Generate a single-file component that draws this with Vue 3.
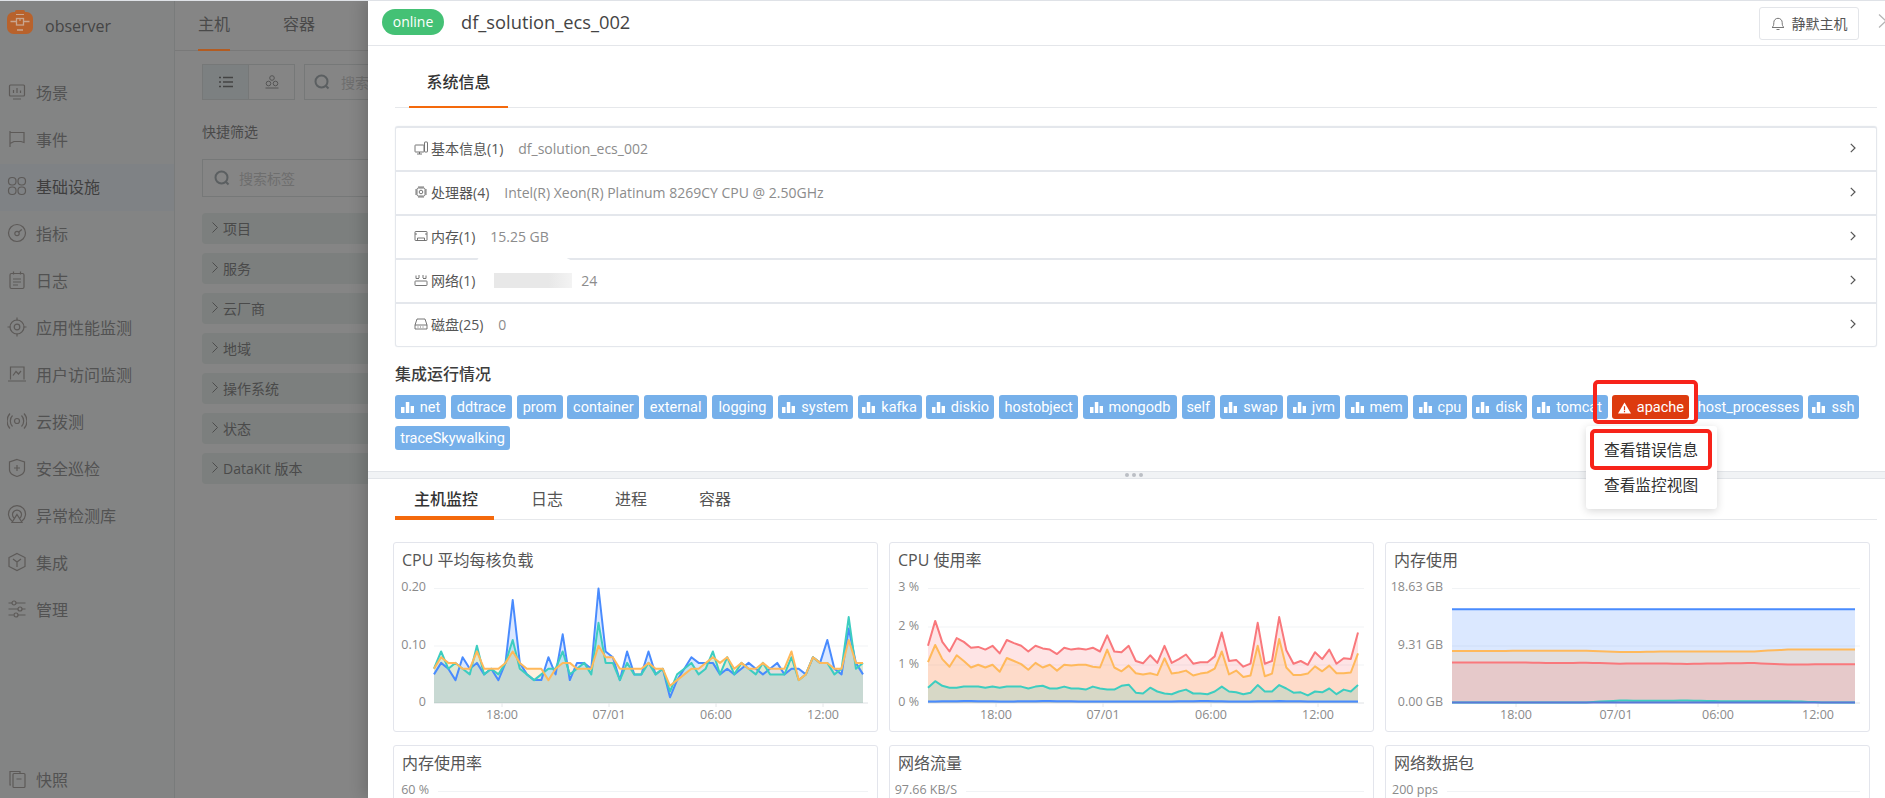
<script setup>
const nav = [
  { t: '场景', i: '<rect x="2.5" y="3" width="15" height="11" rx="1"/><path d="M6.5 11V8M10 11V6M13.5 11V8.5M6 17h8"/>' },
  { t: '事件', i: '<path d="M3 2v16M3 3.500h14v10l-3-1H7l-4 2"/>' },
  { t: '基础设施', i: '<rect x="1.500" y="1.500" width="7.500" height="7.500" rx="3.500"/><rect x="11" y="1.500" width="7.500" height="7.500" rx="3.500"/><rect x="1.500" y="11" width="7.500" height="7.500" rx="3.500"/><rect x="11" y="11" width="7.500" height="7.500" rx="3.500"/>', active: true },
  { t: '指标', i: '<circle cx="10" cy="10" r="8.500"/><circle cx="10" cy="10.500" r="2.200"/><path d="M11.800 9l3-2.500"/>' },
  { t: '日志', i: '<rect x="3" y="3.500" width="14" height="15" rx="1.500"/><path d="M6.500 1.500v3M13.500 1.500v3M6 9h8M6 12h8M6 15h5"/>' },
  { t: '应用性能监测', i: '<circle cx="10" cy="10" r="7"/><circle cx="10" cy="10" r="2.800"/><path d="M10 0.500v3M10 16.500v3M0.500 10h3M16.500 10h3"/>' },
  { t: '用户访问监测', i: '<path d="M3.500 15.500V3h13.500v12.500M1 17h18M6 11.500l3-4 2.500 2.500 2.500-3"/>' },
  { t: '云拨测', i: '<circle cx="10" cy="10" r="2.500"/><path d="M5.500 4.500a8 8 0 0 0 0 11M14.500 4.500a8 8 0 0 1 0 11M3 2.500a11 11 0 0 0 0 15M17 2.500a11 11 0 0 1 0 15"/>' },
  { t: '安全巡检', i: '<path d="M10 1.500l7.500 2.500v8c0 3-4 5.500-7.500 6.500-3.500-1-7.500-3.500-7.500-6.500V4zM10 7v6M7 10h6"/>' },
  { t: '异常检测库', i: '<path d="M5 16a8.500 8.500 0 1 1 10 0M7 13a4.500 4.500 0 1 1 6 0M10 9.500l5 8H5z"/>' },
  { t: '集成', i: '<path d="M10 1.500l8 4v9l-8 4-8-4v-9zM6 7l4 3 4-3M10 10v5"/>' },
  { t: '管理', i: '<path d="M1.500 4h3.500M9 4h9.500M1.500 10h9.500M15 10h3.500M1.500 16h5M11 16h7.500"/><circle cx="7" cy="4" r="2"/><circle cx="13" cy="10" r="2"/><circle cx="9" cy="16" r="2"/>' }
]
const snapIcon = '<rect x="6" y="4.500" width="12" height="14" rx="1"/><path d="M4 16H3V2.500h10V4.500M9.500 10h5"/>'
const filters = ['项目', '服务', '云厂商', '地域', '操作系统', '状态', 'DataKit 版本']

const infoRows = [
  { label: '基本信息(1)', value: 'df_solution_ecs_002', i: '<rect x="1" y="4" width="9" height="7" rx="0.500"/><path d="M3 13h5M5.500 11v2"/><rect x="10.500" y="1" width="3" height="10" rx="0.500" fill="#fff"/>' },
  { label: '处理器(4)', value: 'Intel(R) Xeon(R) Platinum 8269CY CPU @ 2.50GHz', i: '<rect x="3" y="3" width="8" height="8" rx="1.500"/><circle cx="7" cy="7" r="1.800"/><path d="M5 1v2M7 1v2M9 1v2M5 11v2M7 11v2M9 11v2M1 5h2M1 7h2M1 9h2M11 5h2M11 7h2M11 9h2"/>' },
  { label: '内存(1)', value: '15.25 GB', i: '<rect x="1" y="2.500" width="12" height="9" rx="0.500"/><path d="M1 5h2M11 5h2M3.500 11.500V9h7v2.500"/>' },
  { label: '网络(1)', value: '24', redact: true, i: '<rect x="1" y="8" width="12" height="4.500" rx="0.500"/><path d="M2 2.500v3M5 2v3M9 2v3M12 2.500v3M2 5.500h3M9 5.500h3"/>' },
  { label: '磁盘(25)', value: '0', i: '<path d="M3 2h8l2 6v4H1V8zM1 8h12M3.500 10h1M6 10h1M8.500 10h1"/>' }
]

const tags = [
  ['net', 1, 51], ['ddtrace', 0, 61], ['prom', 0, 46], ['container', 0, 72], ['external', 0, 63], ['logging', 0, 61], ['system', 1, 75], ['kafka', 1, 64], ['diskio', 1, 68],
  ['hostobject', 0, 79], ['mongodb', 1, 94], ['self', 0, 33], ['swap', 1, 63], ['jvm', 1, 53], ['mem', 1, 63], ['cpu', 1, 54], ['disk', 1, 55], ['tomcat', 1, 76],
  ['apache', 2, 77], ['host_processes', 0, 109], ['ssh', 1, 51], ['traceSkywalking', 0, 115]
].map(([name, kind, width]) => ({ name, kind, width }))

const detailTabs = ['主机监控', '日志', '进程', '容器']

const BLUE = '#498bfe', TEAL = '#3dcdc0', ORANGE = '#ffb95b', RED = '#f9787c'
const TOP = 9.5, BOTTOM = 124

function stretch(points, n = 61) {
  const out = []
  for (let i = 0; i < n; i++) {
    const p = (i / (n - 1)) * (points.length - 1)
    const a = Math.floor(p), b = Math.min(a + 1, points.length - 1)
    out.push(points[a] + (points[b] - points[a]) * (p - a))
  }
  return out
}

function build(spec) {
  const { x0, x1, max } = spec
  const series = (spec.series || []).map(s => {
    const step = (x1 - x0) / (s.values.length - 1)
    const pts = s.values.map((v, i) => [x0 + i * step, BOTTOM - (v / max) * (BOTTOM - TOP)])
    const line = pts.map((p, i) => (i ? 'L' : 'M') + p[0].toFixed(1) + ' ' + p[1].toFixed(1)).join(' ')
    return { color: s.color, line, area: line + ` L${x1} ${BOTTOM} L${x0} ${BOTTOM} Z` }
  })
  return { ...spec, series }
}

const charts = [
  {
    title: 'CPU 平均每核负载', gx0: 40, gx1: 474, x0: 40, x1: 469, max: 0.2, labelX: 32,
    y: [['0.20', TOP], ['0.10', 67], ['0', BOTTOM]], x: [['18:00', 108], ['07/01', 215], ['06:00', 322], ['12:00', 429]],
    series: [
      { color: BLUE, values: [.05,.07,.06,.04,.08,.06,.07,.05,.06,.04,.07,.18,.07,.05,.04,.04,.08,.05,.12,.04,.07,.07,.06,.20,.09,.08,.04,.09,.05,.05,.09,.05,.06,.01,.04,.06,.08,.07,.07,.07,.05,.06,.05,.06,.07,.06,.05,.06,.07,.05,.06,.06,.05,.08,.07,.11,.06,.05,.13,.07,.05] },
      { color: TEAL, values: [.06,.09,.06,.07,.06,.05,.10,.05,.06,.05,.07,.11,.06,.05,.04,.05,.06,.06,.09,.05,.06,.07,.05,.14,.07,.07,.04,.07,.05,.05,.07,.05,.06,.02,.05,.06,.07,.05,.06,.09,.05,.08,.05,.07,.06,.05,.07,.05,.05,.05,.08,.04,.05,.08,.07,.07,.05,.06,.15,.06,.07] },
      { color: ORANGE, values: [.06,.08,.07,.07,.06,.06,.09,.06,.06,.06,.07,.09,.07,.06,.06,.06,.04,.06,.07,.07,.06,.06,.06,.10,.08,.08,.06,.06,.06,.06,.07,.06,.06,.03,.04,.05,.06,.06,.07,.08,.07,.08,.06,.07,.06,.06,.07,.06,.06,.06,.09,.04,.05,.08,.07,.07,.06,.06,.11,.07,.07] }
    ]
  },
  {
    title: 'CPU 使用率', gx0: 38, gx1: 474, x0: 38, x1: 468, max: 3, labelX: 29,
    y: [['3 %', TOP], ['2 %', 48], ['1 %', 86], ['0 %', BOTTOM]], x: [['18:00', 106], ['07/01', 213], ['06:00', 321], ['12:00', 428]],
    series: [
      { color: RED, values: [1.5,2.15,1.6,1.35,1.7,1.6,1.45,1.47,1.4,1.5,1.3,1.65,1.57,1.5,1.35,1.5,1.43,1.4,1.28,1.45,1.4,1.43,1.4,1.45,1.35,1.77,1.35,1.33,1.5,1.1,1.04,1.25,1.05,1.5,1.05,1.15,1.27,1.03,1.07,1.07,1.22,1.85,1.1,1.13,.95,1.03,2.1,1.03,1.1,2.25,1.38,1.03,1.1,1.0,1.33,1.15,1.4,1.03,1.17,1.15,1.85] },
      { color: ORANGE, values: [1.07,1.52,1.15,.95,1.25,1.1,.93,1.0,.93,1.0,.82,1.18,1.1,1.02,.87,1.05,.93,1.0,.85,1.0,.98,1.0,1.0,.95,.93,1.4,.93,.83,.98,.78,.75,.78,.73,1.17,.77,.8,.85,.72,.77,.8,.9,1.35,.75,.85,.68,.72,1.5,.7,.77,1.68,.93,.73,.73,.77,.96,.83,.98,.78,.78,.8,1.3] },
      { color: TEAL, values: [.4,.57,.45,.4,.4,.43,.43,.43,.4,.43,.4,.43,.43,.43,.38,.43,.45,.38,.38,.43,.38,.38,.35,.43,.38,.35,.35,.45,.48,.27,.25,.4,.3,.25,.23,.3,.35,.25,.25,.23,.3,.43,.3,.28,.23,.27,.47,.3,.3,.47,.38,.27,.28,.2,.3,.28,.38,.23,.35,.3,.47] },
      { color: BLUE, values: stretch([.04, .05, .04, .05, .04, .04, .04, .05, .04, .05, .04, .04]) }
    ]
  },
  {
    title: '内存使用', gx0: 66, gx1: 474, x0: 66, x1: 469, max: 18.63, labelX: 57,
    y: [['18.63 GB', TOP], ['9.31 GB', 67], ['0.00 GB', BOTTOM]], x: [['18:00', 130], ['07/01', 230], ['06:00', 332], ['12:00', 432]],
    series: [
      { color: BLUE, values: stretch([15.25, 15.25]) },
      { color: ORANGE, values: stretch([8.45, 8.45, 8.5, 8.5, 8.5, 8.28, 8.35, 8.4, 8.4, 8.4, 8.7, 8.7, 8.7]) },
      { color: RED, values: stretch([6.6, 6.6, 6.6, 6.5, 6.55, 6.4, 6.45, 6.35, 6.45, 6.5, 6.25, 6.3, 6.3]) },
      { color: TEAL, values: stretch([.1, .1, .1, .1, .1, .4, .35, .4, .3, .3, .3, .1, .1]) },
      { color: '#5a78d8', values: stretch([.08, .08]) }
    ]
  },
  {
    title: '内存使用率', gx0: 44, gx1: 474, x0: 44, x1: 469, max: 60, labelX: 35, y: [['60 %', TOP]], x: [],
    bars: [[44, 122, '#e6effe'], [166, 72, '#d2e3fe'], [300, 95, '#e6effe'], [395, 74, BLUE]]
  },
  { title: '网络流量', gx0: 76, gx1: 474, x0: 76, x1: 469, max: 1, labelX: 67, y: [['97.66 KB/S', TOP]], x: [] },
  { title: '网络数据包', gx0: 61, gx1: 474, x0: 61, x1: 469, max: 1, labelX: 52, y: [['200 pps', TOP]], x: [] }
].map(build)
</script>

<template>
  <div class="page">
    <div class="app">
      <aside class="side">
        <div class="brand">
          <svg class="logo" viewBox="0 0 26 24">
            <rect x="8" y="0" width="10" height="5" rx="1.500" fill="#b8622c" />
            <rect x="0" y="2" width="26" height="22" rx="6.500" fill="#b8622c" />
            <path d="M3.500 11.500h6M16.500 11.500h6M10 20h6" stroke="#c9a68f" stroke-width="1.400" fill="none" />
            <rect x="9.500" y="8.500" width="7" height="6.500" fill="none" stroke="#c9a68f" stroke-width="1.300" />
            <path d="M13 8.500v2.500M9 4.500h8" stroke="#c9a68f" stroke-width="1.100" fill="none" />
          </svg>
          <span class="brand-name">observer</span>
        </div>
        <div v-for="n in nav" :key="n.t" class="nav-item" :class="{ active: n.active }">
          <svg class="nav-icon" viewBox="0 0 20 20" v-html="n.i"></svg>
          <span>{{ n.t }}</span>
        </div>
        <div class="nav-item snap">
          <svg class="nav-icon" viewBox="0 0 20 20" v-html="snapIcon"></svg>
          <span>快照</span>
        </div>
      </aside>
      <main class="main">
        <div class="main-tabs">
          <span class="main-tab on">主机</span>
          <span class="main-tab">容器</span>
        </div>
        <div class="toolbar">
          <div class="views">
            <span class="view on">
              <svg width="14" height="12" viewBox="0 0 14 12" fill="none" stroke="#444" stroke-width="1.300"><path d="M0 1.500h2M4 1.500h10M0 6h2M4 6h10M0 10.500h2M4 10.500h10" /></svg>
            </span>
            <span class="view">
              <svg width="14" height="14" viewBox="0 0 14 14" fill="none" stroke="#555"><circle cx="7" cy="3" r="2.300" /><circle cx="3.500" cy="8.500" r="2.300" /><circle cx="10.500" cy="8.500" r="2.300" /><path d="M0.500 13h13" /></svg>
            </span>
          </div>
          <div class="search wide">
            <svg class="search-icon" viewBox="0 0 16 16" fill="none" stroke="#5b5f61" stroke-width="2"><circle cx="7.500" cy="7.500" r="6" /><path d="M12 12l2.500 2.500" /></svg>
            <span>搜索</span>
          </div>
        </div>
        <div class="quick">快捷筛选</div>
        <div class="search tag-search">
          <svg class="search-icon" viewBox="0 0 16 16" fill="none" stroke="#5b5f61" stroke-width="2"><circle cx="7.500" cy="7.500" r="6" /><path d="M12 12l2.500 2.500" /></svg>
          <span>搜索标签</span>
        </div>
        <div v-for="f in filters" :key="f" class="filter">
          <svg width="6" height="11" viewBox="0 0 6 11" fill="none" stroke="#4d4d4d"><path d="M0.500 0.500l5 5-5 5" /></svg>
          <span>{{ f }}</span>
        </div>
      </main>
    </div>

    <section class="drawer">
      <header class="head">
        <span class="badge">online</span>
        <span class="host">df_solution_ecs_002</span>
        <button class="mute">
          <svg width="14" height="15" viewBox="0 0 14 15" fill="none" stroke="#777"><path d="M1 11.500h12c-1.500-1-1.800-2.500-1.800-5a4.200 4.200 0 0 0-8.400 0c0 2.500-.3 4-1.800 5zM5.500 13.500h3" /></svg>
          <span>静默主机</span>
        </button>
      </header>
      <svg class="close" width="10" height="16" viewBox="0 0 10 16" fill="none" stroke="#b4b4b4" stroke-width="1.200"><path d="M1 1.500l7 6.500-7 6.500" /></svg>

      <div class="tabbar">
        <span class="tab-on">系统信息</span>
      </div>

      <div class="panel">
        <div v-for="r in infoRows" :key="r.label" class="row">
          <svg class="row-icon" viewBox="0 0 14 14" fill="none" stroke="#666" stroke-width="0.900" v-html="r.i"></svg>
          <span class="row-label">{{ r.label }}</span>
          <span v-if="r.redact" class="redact"><i class="blob"></i><i class="mask"></i></span>
          <span class="row-value" :class="{ tight: r.redact }">{{ r.value }}</span>
          <svg class="row-arrow" width="6" height="10" viewBox="0 0 6 10" fill="none" stroke="#555" stroke-width="1.200"><path d="M0.800 0.800L5 5 0.800 9.200" /></svg>
        </div>
      </div>

      <h3 class="section">集成运行情况</h3>
      <div class="tags">
        <span v-for="t in tags" :key="t.name" class="tag" :class="{ bad: t.kind === 2 }" :style="{ width: t.width + 'px' }">
          <svg v-if="t.kind === 1" width="13" height="11" viewBox="0 0 13 11" fill="#fff"><rect x="0" y="5" width="3.500" height="6" /><rect x="4.800" y="0" width="3.500" height="11" /><rect x="9.600" y="4" width="3.400" height="7" /></svg>
          <svg v-if="t.kind === 2" width="13" height="12" viewBox="0 0 13 12"><path d="M6.500 0.500L13 11.500H0z" fill="#fff" /><path d="M6.500 4.200v4M6.500 9v1.300" stroke="#dd3b0e" stroke-width="1.200" /></svg>
          {{ t.name }}
        </span>
      </div>

      <div class="resizer"><i></i><i></i><i></i></div>

      <nav class="detail-tabs">
        <span v-for="(d, i) in detailTabs" :key="d" class="detail-tab" :class="{ on: i === 0 }">{{ d }}</span>
      </nav>

      <div class="charts">
        <article v-for="c in charts" :key="c.title" class="card">
          <h4 class="card-title">{{ c.title }}</h4>
          <svg class="plot" width="483" height="150" viewBox="0 0 483 150">
            <line v-for="l in c.y" :key="l[0]" :x1="c.gx0" :x2="c.gx1" :y1="l[1]" :y2="l[1]" class="grid" />
            <template v-if="c.x.length">
              <line :x1="c.gx0" :x2="c.gx1" :y1="BOTTOM" :y2="BOTTOM" class="base" />
              <line v-for="l in c.x" :key="'t' + l[0]" :x1="l[1]" :x2="l[1]" :y1="BOTTOM" :y2="BOTTOM + 4" class="base" />
            </template>
            <rect v-for="(b, i) in c.bars || []" :key="i" :x="b[0]" :width="b[1]" y="16" height="10" :fill="b[2]" />
            <g v-for="(s, i) in c.series" :key="i">
              <path :d="s.area" :fill="s.color" fill-opacity="0.2" />
            </g>
            <g v-for="(s, i) in c.series" :key="'l' + i">
              <path :d="s.line" :stroke="s.color" fill="none" stroke-width="2" stroke-linejoin="round" />
            </g>
            <text v-for="l in c.y" :key="'y' + l[0]" :x="c.labelX" :y="l[1] - 0.5" class="axis" text-anchor="end" dominant-baseline="middle">{{ l[0] }}</text>
            <text v-for="l in c.x" :key="'x' + l[0]" :x="l[1]" y="137" class="axis" text-anchor="middle" dominant-baseline="middle">{{ l[0] }}</text>
          </svg>
        </article>
      </div>

      <div class="mark mark-tag"></div>
      <div class="menu">
        <div class="menu-item">查看错误信息</div>
        <div class="menu-item">查看监控视图</div>
      </div>
      <div class="mark mark-item"></div>
    </section>
    <div class="topline"></div>
  </div>
</template>

<style>
html, body { margin: 0; overflow: hidden; background: #fff; }
</style>

<style scoped>
.page {
  position: relative;
  width: 1885px;
  height: 798px;
  overflow: hidden;
  font-family: "Open Sans", "Noto Sans CJK SC", sans-serif;
  background: #858585;
}
.topline { position: absolute; left: 0; right: 0; top: 0; height: 1px; background: #dfe2e7; }

.app { display: flex; height: 798px; }
.side {
  width: 174px;
  flex: none;
  display: flex;
  flex-direction: column;
  background: #838484;
  border-right: 1px solid #797b7b;
  color: #525252;
}
.brand { height: 70px; flex: none; box-sizing: border-box; padding: 10px 0 0 7px; display: flex; align-items: flex-start; gap: 12px; }
.logo { width: 26px; height: 24px; }
.brand-name { font-size: 16px; line-height: 32px; color: #454545; }
.nav-item { height: 47px; box-sizing: border-box; padding: 0 0 3px 7px; flex: none; display: flex; align-items: center; gap: 9px; font-size: 16px; }
.nav-item.active { background: #7f8285; color: #3f3f3f; }
.nav-item.snap { margin-top: auto; height: 38px; padding-bottom: 0; }
.nav-icon { width: 20px; height: 20px; fill: none; stroke: #5d5a58; stroke-width: 1.200; flex: none; }

.main { flex: 1; padding-left: 27px; color: #4a4a4a; min-width: 0; }
.main-tabs { height: 50px; margin-left: -27px; padding-left: 23px; border-bottom: 1px solid #797979; display: flex; gap: 53px; }
.main-tab { font-size: 16px; line-height: 48px; height: 51px; box-sizing: border-box; color: #4a4a4a; }
.main-tab.on { border-bottom: 2px solid #b35c22; }
.toolbar { display: flex; gap: 9px; margin-top: 13px; }
.views { display: flex; border: 1px solid #767878; height: 34px; }
.view { width: 45px; display: flex; align-items: center; justify-content: center; }
.view.on { background: #7c8081; border-right: 1px solid #767878; }
.search { display: flex; align-items: center; gap: 11px; border: 1px solid #767878; box-sizing: border-box; font-size: 14px; color: #6e6e6e; }
.search.wide { width: 300px; height: 36px; padding-left: 9px; }
.search-icon { width: 16px; height: 16px; flex: none; }
.quick { font-size: 14px; line-height: 20px; margin-top: 22px; }
.tag-search { margin-top: 17px; width: 400px; height: 38px; padding-left: 11px; gap: 9px; }
.filter { margin-top: 9px; height: 31px; width: 400px; background: #7c7f7e; border-radius: 4px; display: flex; align-items: center; gap: 5px; padding: 0 0 2px 10px; font-size: 14px; box-sizing: border-box; }
.tag-search + .filter { margin-top: 16px; }

.drawer {
  position: absolute;
  left: 368px;
  top: 0;
  width: 1517px;
  height: 798px;
  background: #fff;
  box-shadow: -5px 0 14px rgba(0, 0, 0, 0.16);
  overflow: hidden;
}
.head { box-sizing: border-box; border-bottom: 1px solid #e4e6ea; display: flex; align-items: center; padding: 1px 26px 0 14px; height: 46px; }
.badge { width: 62px; height: 26px; margin-top: -3px; border-radius: 13px; background: #44c175; color: #fff; font-size: 14px; line-height: 25px; text-align: center; }
.host { margin-left: 17px; font-size: 18.300px; color: #444; margin-top: -3px; }
.mute { margin-left: auto; width: 100px; height: 33px; box-sizing: border-box; display: flex; align-items: center; justify-content: center; gap: 7px; background: #fff; border: 1px solid #e3e5e9; border-radius: 3px; font: 14px "Open Sans", "Noto Sans CJK SC", sans-serif; color: #555; padding: 0; }
.close { position: absolute; left: 1510px; top: 13px; }

.tabbar { margin: 0 8px 0 27px; height: 62px; box-sizing: border-box; border-bottom: 1px solid #e6e8eb; display: flex; align-items: flex-end; }
.tab-on { margin-left: 14px; width: 99px; height: 37px; margin-bottom: -1px; box-sizing: border-box; border-bottom: 2px solid #f4690c; text-align: center; font-size: 16px; font-weight: 500; color: #333; line-height: 22px; }

.panel { margin: 18px 8px 0 27px; border: 1px solid #e4e7ec; border-top-width: 2px; border-bottom-width: 1px; border-radius: 3px; box-shadow: 0 0 1px #d8dce2; }
.row { position: relative; box-sizing: content-box; display: flex; align-items: center; padding: 0 20px 2px 18px; height: 40px; font-size: 14px; border-bottom: 2px solid #e4e7ec; }
.row:last-child { border-bottom: 0; }
.row-icon { width: 14px; height: 14px; flex: none; margin-right: 3px; }
.row-label { color: #555; }
.row-value { margin-left: 15px; color: #8c8c8c; }
.row-value.tight { margin-left: 0; }
.row-arrow { margin-left: auto; }
.redact { position: relative; display: block; margin-left: 16px; width: 90px; height: 40px; flex: none; }
.blob { position: absolute; left: -14px; top: -4px; width: 104px; height: 42px; background: #fff; border-radius: 10px 40px 30px 10px; }
.mask { position: absolute; left: 3px; top: 13px; width: 78px; height: 15px; background: linear-gradient(90deg, #e8e8e8 70%, #f3f3f3); }

.section { margin: 17px 0 0 27px; font-size: 16px; line-height: 20px; font-weight: 500; color: #3c3c3c; }
.tags { margin: 11px 18px 0 27px; display: flex; flex-wrap: wrap; gap: 7px 4.800px; }
.tag { flex: none; height: 24px; box-sizing: border-box; padding-top: 1px; display: inline-flex; align-items: center; justify-content: center; gap: 6px; border-radius: 3px; background: #76b0ea; color: #fff; font-family: Roboto, sans-serif; font-size: 14.500px; line-height: 23px; white-space: nowrap; }
.tag.bad { background: #dd3b0e; }

.resizer { margin-top: 21px; height: 8px; box-sizing: border-box; border-top: 1px solid #e2e5e9; border-bottom: 1px solid #e2e5e9; background: #f1f3f5; display: flex; align-items: center; gap: 3px; padding-left: 757px; }
.resizer i { width: 4px; height: 4px; border-radius: 50%; background: #bbbfc4; }

.detail-tabs { margin: 0 8px 0 27px; height: 41px; box-sizing: border-box; border-bottom: 1px solid #e6e8eb; display: flex; gap: 18px; }
.detail-tab { padding: 0 17px; height: 41px; box-sizing: border-box; font-size: 16px; line-height: 41px; color: #555; }
.detail-tab.on { padding: 0 16px 0 19px; border-bottom: 4px solid #f4690c; font-weight: 500; color: #333; margin-right: 2px; }

.charts { margin: 22px 0 0 25px; display: grid; grid-template-columns: repeat(3, 485px); grid-auto-rows: 190px; gap: 13px 11px; }
.card { box-sizing: border-box; border: 1px solid #e3e5ec; border-radius: 3px; overflow: hidden; }
.card-title { margin: 0; padding-left: 8px; font-size: 16px; line-height: 34px; height: 36px; font-weight: 400; color: #555; }
.plot { display: block; }
.grid { stroke: #f1f3f5; stroke-width: 1; }
.base { stroke: #e6e8ea; stroke-width: 1; }
.axis { font-size: 12.500px; fill: #8a8a8a; font-family: "Open Sans", "Noto Sans CJK SC", sans-serif; }

.mark { position: absolute; box-sizing: border-box; border: 4px solid #f7231a; border-radius: 5px; }
.mark-tag { left: 1225px; top: 380px; width: 105px; height: 44px; }
.mark-item { left: 1222px; top: 429px; width: 122px; height: 41px; }
.menu { position: absolute; left: 1218px; top: 426px; width: 131px; height: 83px; box-sizing: border-box; padding-top: 7px; background: #fff; border-radius: 3px; box-shadow: 0 2px 8px rgba(0, 0, 0, 0.16); }
.menu-item { height: 35px; line-height: 35px; padding-left: 18px; font-size: 15.700px; color: #333; white-space: nowrap; }
</style>
